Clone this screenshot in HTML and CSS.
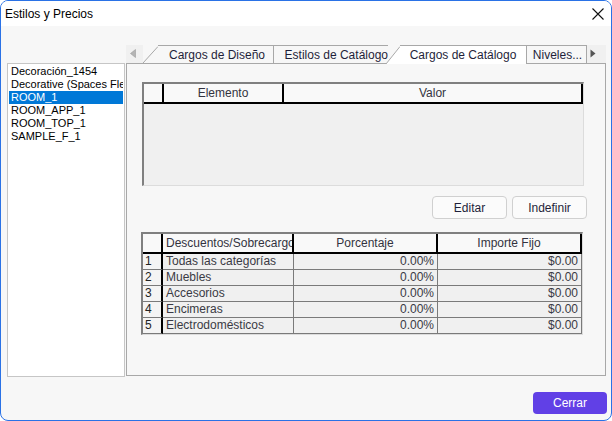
FILE: index.html
```html
<!DOCTYPE html>
<html lang="es">
  <head>
    <meta charset="UTF-8" />
    <meta name="viewport" content="width=device-width, initial-scale=1.0" />
    <title>Estilos y Precios</title>
    <link rel="stylesheet" href="styles.css">
  </head>
  <body>
    <div class="window">
      <div class="titlebar">
        <span class="title">Estilos y Precios</span>
        <svg class="close" width="12" height="12" viewBox="0 0 12 12">
          <path d="M0.5 0.5 L11.5 11.5 M11.5 0.5 L0.5 11.5" stroke="#111" stroke-width="1.1" fill="none" />
        </svg>
      </div>

      <div class="content">
        <ul class="list">
          <li>Decoración_1454</li>
          <li>Decorative (Spaces Flex)</li>
          <li class="selected">ROOM_1</li>
          <li>ROOM_APP_1</li>
          <li>ROOM_TOP_1</li>
          <li>SAMPLE_F_1</li>
        </ul>

        <div class="tabbox">
          <div class="tabstrip">
            <span class="scroll scroll-left">
              <svg width="6" height="9" viewBox="0 0 6 9"><polygon points="5.5,0.5 5.5,8.5 0.5,4.5" fill="#b4b4b4" stroke="#9a9a9a" stroke-width="0.6" /></svg>
            </span>
            <div class="tab tab-first">
              <svg class="slant" width="15" height="17" viewBox="0 0 15 17"><polygon points="0,17 15,0 15,17" fill="#f7f7f7" /><line x1="0" y1="17" x2="15" y2="0.5" stroke="#a8a8a8" /></svg>
              <span class="tab-label">Cargos de Diseño</span>
            </div>
            <div class="tab tab-second"><span class="tab-label">Estilos de Catálogo</span></div>
            <div class="tab tab-active">
              <svg class="slant" width="14" height="18" viewBox="0 0 14 18"><polygon points="0,18 14,0 14,18" fill="#fff" /><line x1="0" y1="18" x2="14" y2="0.5" stroke="#a8a8a8" /></svg>
              <span class="tab-label">Cargos de Catálogo</span>
            </div>
            <div class="tab tab-last"><span class="tab-label">Niveles...</span></div>
            <span class="scroll scroll-right">
              <svg width="6" height="9" viewBox="0 0 6 9"><polygon points="0.5,0.5 0.5,8.5 5.5,4.5" fill="#555" /></svg>
            </span>
          </div>

          <div class="panel">
            <div class="grid-box">
              <table class="grid">
                <colgroup><col style="width:20px"><col style="width:120px"><col style="width:299px"></colgroup>
                <thead>
                  <tr><th></th><th>Elemento</th><th>Valor</th></tr>
                </thead>
              </table>
            </div>

            <div class="actions">
              <button type="button" class="btn">Editar</button>
              <button type="button" class="btn">Indefinir</button>
            </div>

            <table class="grid grid-rates">
              <colgroup><col style="width:20px"><col style="width:131px"><col style="width:144px"><col style="width:144px"></colgroup>
              <thead>
                <tr><th></th><th class="left">Descuentos/Sobrecargos</th><th>Porcentaje</th><th>Importe Fijo</th></tr>
              </thead>
              <tbody>
                <tr><td class="num">1</td><td>Todas las categorías</td><td class="val">0.00%</td><td class="val">$0.00</td></tr>
                <tr><td class="num">2</td><td>Muebles</td><td class="val">0.00%</td><td class="val">$0.00</td></tr>
                <tr><td class="num">3</td><td>Accesorios</td><td class="val">0.00%</td><td class="val">$0.00</td></tr>
                <tr><td class="num">4</td><td>Encimeras</td><td class="val">0.00%</td><td class="val">$0.00</td></tr>
                <tr><td class="num">5</td><td>Electrodomésticos</td><td class="val">0.00%</td><td class="val">$0.00</td></tr>
              </tbody>
            </table>
          </div>
        </div>
      </div>

      <div class="footer">
        <button type="button" class="btn-primary">Cerrar</button>
      </div>
    </div>
  </body>
</html>
```

FILE: styles.css
```css
body {
  margin: 0;
  padding: 0;
  font-family: "Liberation Sans", Arial, sans-serif;
  font-size: 12px;
  background: #fff;
}
.window {
  width: 612px;
  height: 421px;
  box-sizing: border-box;
  border: 1px solid #2a72e6;
  border-radius: 8px;
  overflow: hidden;
  background: #f7f7f7;
}
.titlebar {
  height: 25px;
  background: #fff;
  display: flex;
  align-items: center;
  justify-content: space-between;
  padding: 0 7px 0 4px;
}
.title {
  color: #000;
  font-size: 12px;
}
.close {
  margin-top: 1px;
}
.content {
  display: flex;
  gap: 1px;
  padding: 19px 5px 0 6px;
}
.list {
  list-style: none;
  margin: 18px 0 0 0;
  padding: 1px;
  width: 118px;
  height: 314px;
  box-sizing: border-box;
  background: #fff;
  border: 1px solid #c6c6c6;
}
.list li {
  height: 13px;
  line-height: 13px;
  padding-left: 2px;
  font-size: 11px;
  white-space: nowrap;
  overflow: hidden;
  color: #000;
}
.list li.selected {
  background: #0078d7;
  color: #fff;
}
.tabbox {
  flex: 1;
  display: flex;
  flex-direction: column;
}
.tabstrip {
  display: flex;
  height: 19px;
}
.scroll {
  box-sizing: border-box;
  border-bottom: 1px solid #a8a8a8;
  display: flex;
  align-items: center;
  background: #f0f0f0;
}
.scroll-left {
  width: 17px;
  padding-left: 4px;
  padding-bottom: 2px;
}
.scroll-right {
  flex: 1;
  padding-left: 3px;
  padding-bottom: 2px;
}
.tab {
  box-sizing: border-box;
  display: flex;
  align-items: center;
  border-bottom: 1px solid #a8a8a8;
  color: #1f1f3a;
  white-space: nowrap;
}
.tab-label {
  flex: 1;
  height: 100%;
  box-sizing: border-box;
  border-top: 1px solid #a8a8a8;
  display: flex;
  align-items: center;
  justify-content: center;
  background: #f7f7f7;
}
.slant {
  display: block;
  align-self: flex-end;
}
.tab-first {
  width: 130px;
}
.tab-first .tab-label {
  padding-left: 3px;
}
.tab-second {
  width: 113px;
}
.tab-second .tab-label {
  border-left: 1px solid #a8a8a8;
  justify-content: flex-end;
  padding-right: 0;
  margin-right: -2px;
}
.tab-active {
  width: 141px;
  border-bottom: none;
}
.tab-active .tab-label {
  background: #fff;
  border-right: 1px solid #a8a8a8;
}
.tab-last {
  width: 60px;
}
.tab-last .tab-label {
  border-right: 1px solid #a8a8a8;
  padding-left: 2px;
}
.panel {
  height: 312px;
  box-sizing: border-box;
  border: 1px solid #a8a8a8;
  border-top: none;
  padding: 18px 21px 0 15px;
}
.grid-box {
  width: 442px;
  height: 104px;
  box-sizing: border-box;
  background: #f0f0f0;
  border-top: 2px solid #808080;
  border-left: 2px solid #808080;
  border-right: 1px solid #dcdcdc;
  border-bottom: 1px solid #dcdcdc;
}
.grid {
  table-layout: fixed;
  border-collapse: separate;
  border-spacing: 0;
  width: 439px;
  color: #333340;
}
.grid th {
  height: 18px;
  padding: 0 3px;
  font-weight: normal;
  background: #f9f9f9;
  border-right: 2px solid #000;
  border-bottom: 2px solid #000;
  white-space: nowrap;
  overflow: hidden;
  text-align: center;
}
.grid th.left {
  text-align: left;
  padding-left: 3px;
  padding-right: 0;
  text-overflow: clip;
}
.actions {
  display: flex;
  justify-content: flex-end;
  gap: 5px;
  margin: 10px -3px 0 0;
}
.btn {
  width: 75px;
  height: 23px;
  border: 1px solid #d0d0d0;
  border-radius: 4px;
  background: #fbfbfb;
  font-family: "Liberation Sans", Arial, sans-serif;
  font-size: 12px;
  color: #1f1f3a;
  padding: 0;
}
.grid-rates {
  margin: 13px 0 0 -1px;
  width: 442px;
  box-sizing: border-box;
  background: #f0f0f0;
  border-top: 2px solid #808080;
  border-left: 2px solid #808080;
  border-right: 1px solid #dcdcdc;
  border-bottom: 1px solid #dcdcdc;
}
.grid td {
  height: 15px;
  padding: 0 3px;
  line-height: 15px;
  border-right: 1px solid #7a7a7a;
  border-bottom: 1px solid #7a7a7a;
  white-space: nowrap;
  overflow: hidden;
  color: #3a3a44;
}
.grid td.num {
  padding: 0 2px;
  background: #f4f4f4;
  border-right: 2px solid #000;
  color: #222;
}
.grid td.val {
  text-align: right;
}
.footer {
  display: flex;
  justify-content: flex-end;
  padding: 15px 4px 0 0;
}
.btn-primary {
  width: 74px;
  height: 22px;
  border: none;
  border-radius: 4px;
  background: #6140e6;
  color: #fff;
  font-family: "Liberation Sans", Arial, sans-serif;
  font-size: 12px;
  padding: 0;
}
```
